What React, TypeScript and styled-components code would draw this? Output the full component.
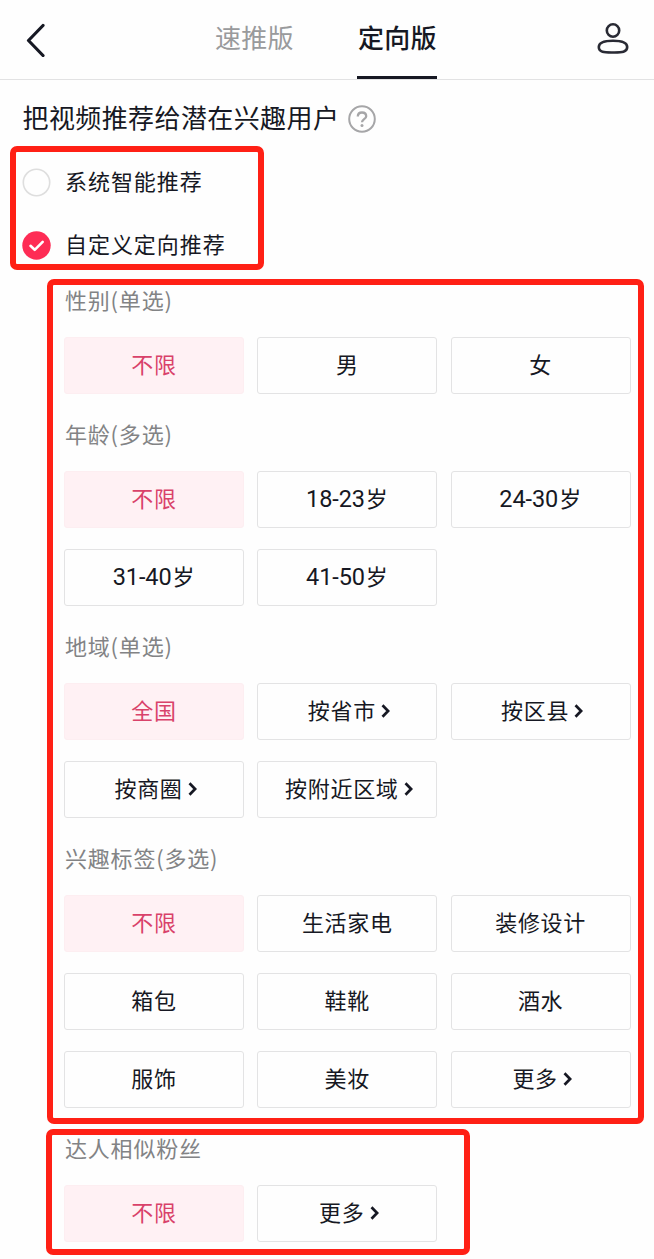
import React from "react";
import styled, { createGlobalStyle } from "styled-components";

const GlobalStyle = createGlobalStyle`
  * { box-sizing: border-box; }
  body {
    margin: 0;
    background: #fefefe;
    color: #161823;
    font-family: "Noto Sans CJK SC", "Noto Sans", sans-serif;
  }
`;

const Page = styled.main`
  width: 654px;
  height: 1259px;
  overflow: hidden;
  display: flex;
  flex-direction: column;
  align-items: flex-start;
`;

const Header = styled.header`
  width: 100%;
  height: 80px;
  flex: none;
  display: flex;
  justify-content: space-between;
  border-bottom: 1px solid #e2e2e3;
  padding: 0 24px 0 25px;
`;

const IconButton = styled.button`
  width: 34px;
  height: 80px;
  padding: 0;
  border: 0;
  background: none;
  display: flex;
  align-items: center;

  svg { display: block; flex: none; }
`;

const Tabs = styled.nav`
  display: flex;
  gap: 63px;
  margin-right: 5px;
`;

const Tab = styled.a<{ $active?: boolean }>`
  width: 80px;
  height: 79px;
  padding-left: 1.5px;
  line-height: 74px;
  text-align: center;
  font-size: 26px;
  letter-spacing: 0.3px;
  white-space: nowrap;
  color: ${(p) => (p.$active ? "#161823" : "#999a9c")};
  font-weight: ${(p) => (p.$active ? 500 : 400)};
  border-bottom: 3px solid ${(p) => (p.$active ? "#161823" : "transparent")};
`;

const Heading = styled.h1`
  height: 66px;
  flex: none;
  margin: 0;
  padding: 0 0 0 22.5px;
  display: flex;
  align-items: center;
  gap: 9px;
  font-size: 26px;
  font-weight: 400;
  letter-spacing: 0.4px;
  line-height: 40px;
  white-space: nowrap;

  svg { margin-top: 11px; }
  span { margin-top: 8px; }
`;

const Frame = styled.section<{ $w: number; $h: number; $x: number }>`
  flex: none;
  width: ${(p) => p.$w}px;
  height: ${(p) => p.$h}px;
  margin-left: ${(p) => p.$x}px;
  border: 6px solid #ff2015;
  border-radius: 7px;
`;

const ModeFrame = styled(Frame)`
  padding: 0 0 0 6px;
  display: flex;
  flex-direction: column;
`;

const TargetFrame = styled(Frame)`
  margin-top: 9px;
  padding: 3px 0 0 11px;
`;

const FansFrame = styled(Frame)`
  margin-top: 5.5px;
  padding: 0.7px 0 0 12.5px;
`;

const Mode = styled.label`
  height: 63px;
  flex: none;
  display: flex;
  align-items: center;
  gap: 14px;
  font-size: 22px;
  letter-spacing: 0.95px;
  line-height: 32px;
  white-space: nowrap;

  &:first-child { margin-top: -3.5px; }
  svg { flex: none; margin-top: 4px; }
`;

const Group = styled.div`
  display: flex;
  flex-direction: column;
  margin-bottom: 27.7px;
`;

const GroupTitle = styled.h2`
  height: 22px;
  margin: 0 0 27.3px 1px;
  font-size: 22px;
  font-weight: 400;
  line-height: 22px;
  letter-spacing: 0.8px;
  white-space: nowrap;
  color: #828385;
`;

const Options = styled.div`
  display: grid;
  grid-template-columns: repeat(3, 180px);
  gap: 21px 13.3px;
`;

const Option = styled.button<{ $selected?: boolean; $more?: boolean }>`
  height: 57px;
  padding: 0 0 5px ${(p) => (p.$more ? 4 : 0)}px;
  display: flex;
  align-items: center;
  justify-content: center;
  gap: 5px;
  border: 1px solid ${(p) => (p.$selected ? "#fdeef1" : "#e3e3e4")};
  border-radius: 3px;
  background: ${(p) => (p.$selected ? "#fff1f4" : "#fefefe")};
  color: ${(p) => (p.$selected ? "#d9426a" : "#161823")};
  font-family: inherit;
  font-size: 22px;
  line-height: 32px;
  letter-spacing: 0.7px;
  white-space: nowrap;

  svg { flex: none; margin-top: 4px; }
`;

const Digits = styled.span`
  font-family: Roboto, sans-serif;
  font-size: 23.5px;
  letter-spacing: -0.1px;
  margin-right: -4px;
  margin-top: 3px;
`;

const BackIcon = () => (
  <svg width="22" height="34" viewBox="0 0 22 34" fill="none" stroke="#161823" strokeWidth="3.2" strokeLinecap="round" strokeLinejoin="round">
    <path d="M18 2.5 3.5 17.5 18 32.5" />
  </svg>
);

const UserIcon = () => (
  <svg width="34" height="34" viewBox="0 0 34 34" fill="none" stroke="#292a34" strokeWidth="2.6">
    <circle cx="17" cy="7.500" r="6.2" />
    <path d="M17 17.700c7 0 14.200 .7 14.200 6.400S25 29.500 17 29.500 2.800 29.800 2.800 24.100 10 17.700 17 17.700Z" />
  </svg>
);

const HelpIcon = () => (
  <svg width="28" height="28" viewBox="0 0 28 28" fill="none" stroke="#a6a6a8" strokeWidth="2">
    <circle cx="14" cy="14" r="12.800" />
    <path d="M9.800 11.600C9.800 8.900 11.500 7.500 14 7.500s4.200 1.500 4.200 3.700c0 3-4.200 3-4.200 6.100" strokeWidth="2.300" />
    <circle cx="14" cy="20.500" r="1.500" fill="#a6a6a8" stroke="none" />
  </svg>
);

const RadioIcon = ({ checked }: { checked?: boolean }) => (
  <svg width="29" height="29" viewBox="0 0 29 29" fill="none">
    {checked ? (
      <>
        <circle cx="14.500" cy="14.500" r="14.200" fill="#fe2c55" />
        <path d="m8.500 14.800 4.200 4 8-8" stroke="#fff" strokeWidth="2.600" strokeLinecap="round" strokeLinejoin="round" />
      </>
    ) : (
      <circle cx="14.500" cy="14.500" r="13.200" stroke="#dedede" strokeWidth="1.600" />
    )}
  </svg>
);

const MoreIcon = () => (
  <svg width="10" height="16" viewBox="0 0 10 16" fill="none" stroke="#161823" strokeWidth="2.700">
    <path d="m1.500 2.300 5.600 5.700-5.600 5.700" />
  </svg>
);

type Item = { digits?: string; text: string; more?: boolean };

const groups: { title: string; items: Item[] }[] = [
  { title: "性别(单选)", items: [{ text: "不限" }, { text: "男" }, { text: "女" }] },
  {
    title: "年龄(多选)",
    items: [
      { text: "不限" },
      { digits: "18-23", text: "岁" },
      { digits: "24-30", text: "岁" },
      { digits: "31-40", text: "岁" },
      { digits: "41-50", text: "岁" },
    ],
  },
  {
    title: "地域(单选)",
    items: [
      { text: "全国" },
      { text: "按省市", more: true },
      { text: "按区县", more: true },
      { text: "按商圈", more: true },
      { text: "按附近区域", more: true },
    ],
  },
  {
    title: "兴趣标签(多选)",
    items: [
      { text: "不限" },
      { text: "生活家电" },
      { text: "装修设计" },
      { text: "箱包" },
      { text: "鞋靴" },
      { text: "酒水" },
      { text: "服饰" },
      { text: "美妆" },
      { text: "更多", more: true },
    ],
  },
];

const fans = { title: "达人相似粉丝", items: [{ text: "不限" }, { text: "更多", more: true }] as Item[] };

const OptionGroup = ({ title, items }: { title: string; items: Item[] }) => (
  <Group>
    <GroupTitle>{title}</GroupTitle>
    <Options>
      {items.map((item, i) => (
        <Option key={i} $selected={i === 0} $more={item.more}>
          {item.digits && <Digits>{item.digits}</Digits>}
          <span>{item.text}</span>
          {item.more && <MoreIcon />}
        </Option>
      ))}
    </Options>
  </Group>
);

export default function App() {
  return (
    <>
      <GlobalStyle />
      <Page>
        <Header>
          <IconButton aria-label="返回"><BackIcon /></IconButton>
          <Tabs>
            <Tab>速推版</Tab>
            <Tab $active>定向版</Tab>
          </Tabs>
          <IconButton aria-label="我的"><UserIcon /></IconButton>
        </Header>
        <Heading>
          <span>把视频推荐给潜在兴趣用户</span>
          <HelpIcon />
        </Heading>
        <ModeFrame $x={10} $w={254} $h={124}>
          <Mode><RadioIcon />系统智能推荐</Mode>
          <Mode><RadioIcon checked />自定义定向推荐</Mode>
        </ModeFrame>
        <TargetFrame $x={47} $w={596.5} $h={844.5}>
          {groups.map((g) => <OptionGroup key={g.title} {...g} />)}
        </TargetFrame>
        <FansFrame $x={45.5} $w={424} $h={126}>
          <OptionGroup {...fans} />
        </FansFrame>
      </Page>
    </>
  );
}
